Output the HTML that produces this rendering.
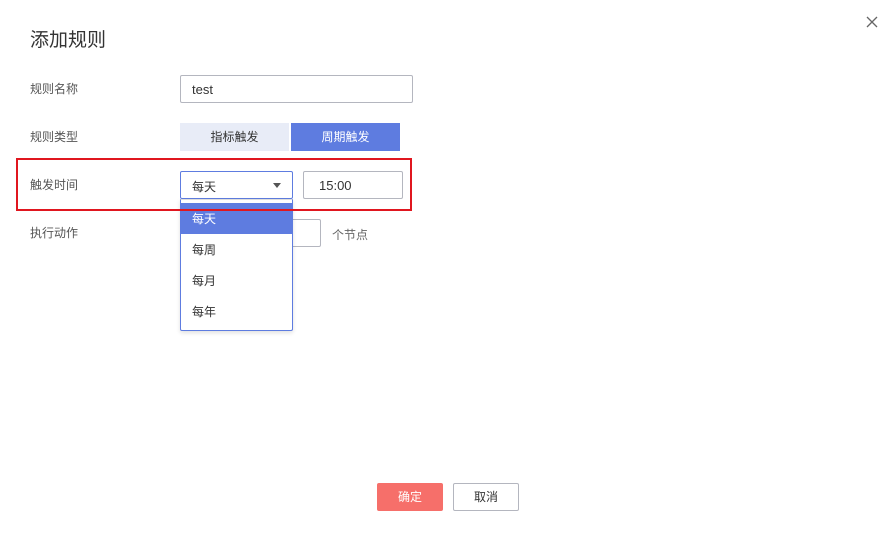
<!DOCTYPE html>
<html><head><meta charset="utf-8"><style>
*{margin:0;padding:0;box-sizing:border-box}
body{width:896px;height:540px;background:#fff;position:relative;overflow:hidden;font-family:"Liberation Sans","Noto Sans CJK SC",sans-serif;color:#333}
.a{position:absolute}
.lbl{font-size:12px;color:#555;left:30px}
.box{border:1px solid #b4b6bf;border-radius:2px;background:#fff}
</style></head><body>
<div class="a" style="left:30px;top:25px;font-size:19px;color:#333">添加规则</div>
<svg class="a" style="left:865px;top:15px" width="14" height="14"><path d="M2 2L12 12M12 2L2 12" stroke="#666" stroke-width="1.3"/></svg>

<div class="a lbl" style="top:80px">规则名称</div>
<div class="a box" style="left:180px;top:75px;width:233px;height:28px;font-size:13px;padding:6px 11px;color:#333">test</div>

<div class="a lbl" style="top:128px">规则类型</div>
<div class="a" style="left:180px;top:123px;width:109px;height:28px;background:#e8ecf7;font-size:12px;text-align:center;line-height:28px;color:#333">指标触发</div>
<div class="a" style="left:291px;top:123px;width:109px;height:28px;background:#5e7ce0;font-size:12px;text-align:center;line-height:28px;color:#fff">周期触发</div>

<div class="a lbl" style="top:176px">触发时间</div>
<div class="a" style="left:180px;top:171px;width:113px;height:28px;border:1px solid #5e7ce0;border-radius:2px;font-size:12px;padding:6px 11px">每天</div>
<div class="a" style="left:273px;top:183px;width:0;height:0;border-left:4px solid transparent;border-right:4px solid transparent;border-top:5px solid #555"></div>
<div class="a box" style="left:303px;top:171px;width:100px;height:28px;font-size:13px;padding:6px 15px">15:00</div>

<div class="a lbl" style="top:224px">执行动作</div>
<div class="a box" style="left:280px;top:219px;width:41px;height:28px"></div>
<div class="a" style="left:332px;top:226px;font-size:12px;color:#666">个节点</div>

<div class="a" style="left:180px;top:199px;width:113px;height:132px;border:1px solid #5e7ce0;border-top:1px solid #ddd;border-radius:0 0 2px 2px;background:#fff;box-shadow:0 2px 4px rgba(0,0,0,.12);font-size:12px">
<div style="margin-top:3px;height:31px;background:#5e7ce0;color:#fff;padding:7px 11px">每天</div>
<div style="height:31px;padding:7px 11px">每周</div>
<div style="height:31px;padding:7px 11px">每月</div>
<div style="height:31px;padding:7px 11px">每年</div>
</div>

<div class="a" style="left:16px;top:158px;width:396px;height:53px;border:2px solid #e0161f"></div>

<div class="a" style="left:377px;top:483px;width:66px;height:28px;background:#f66f6a;border-radius:2px;color:#fff;font-size:12px;text-align:center;line-height:28px">确定</div>
<div class="a box" style="left:453px;top:483px;width:66px;height:28px;font-size:12px;text-align:center;line-height:26px">取消</div>
</body></html>
